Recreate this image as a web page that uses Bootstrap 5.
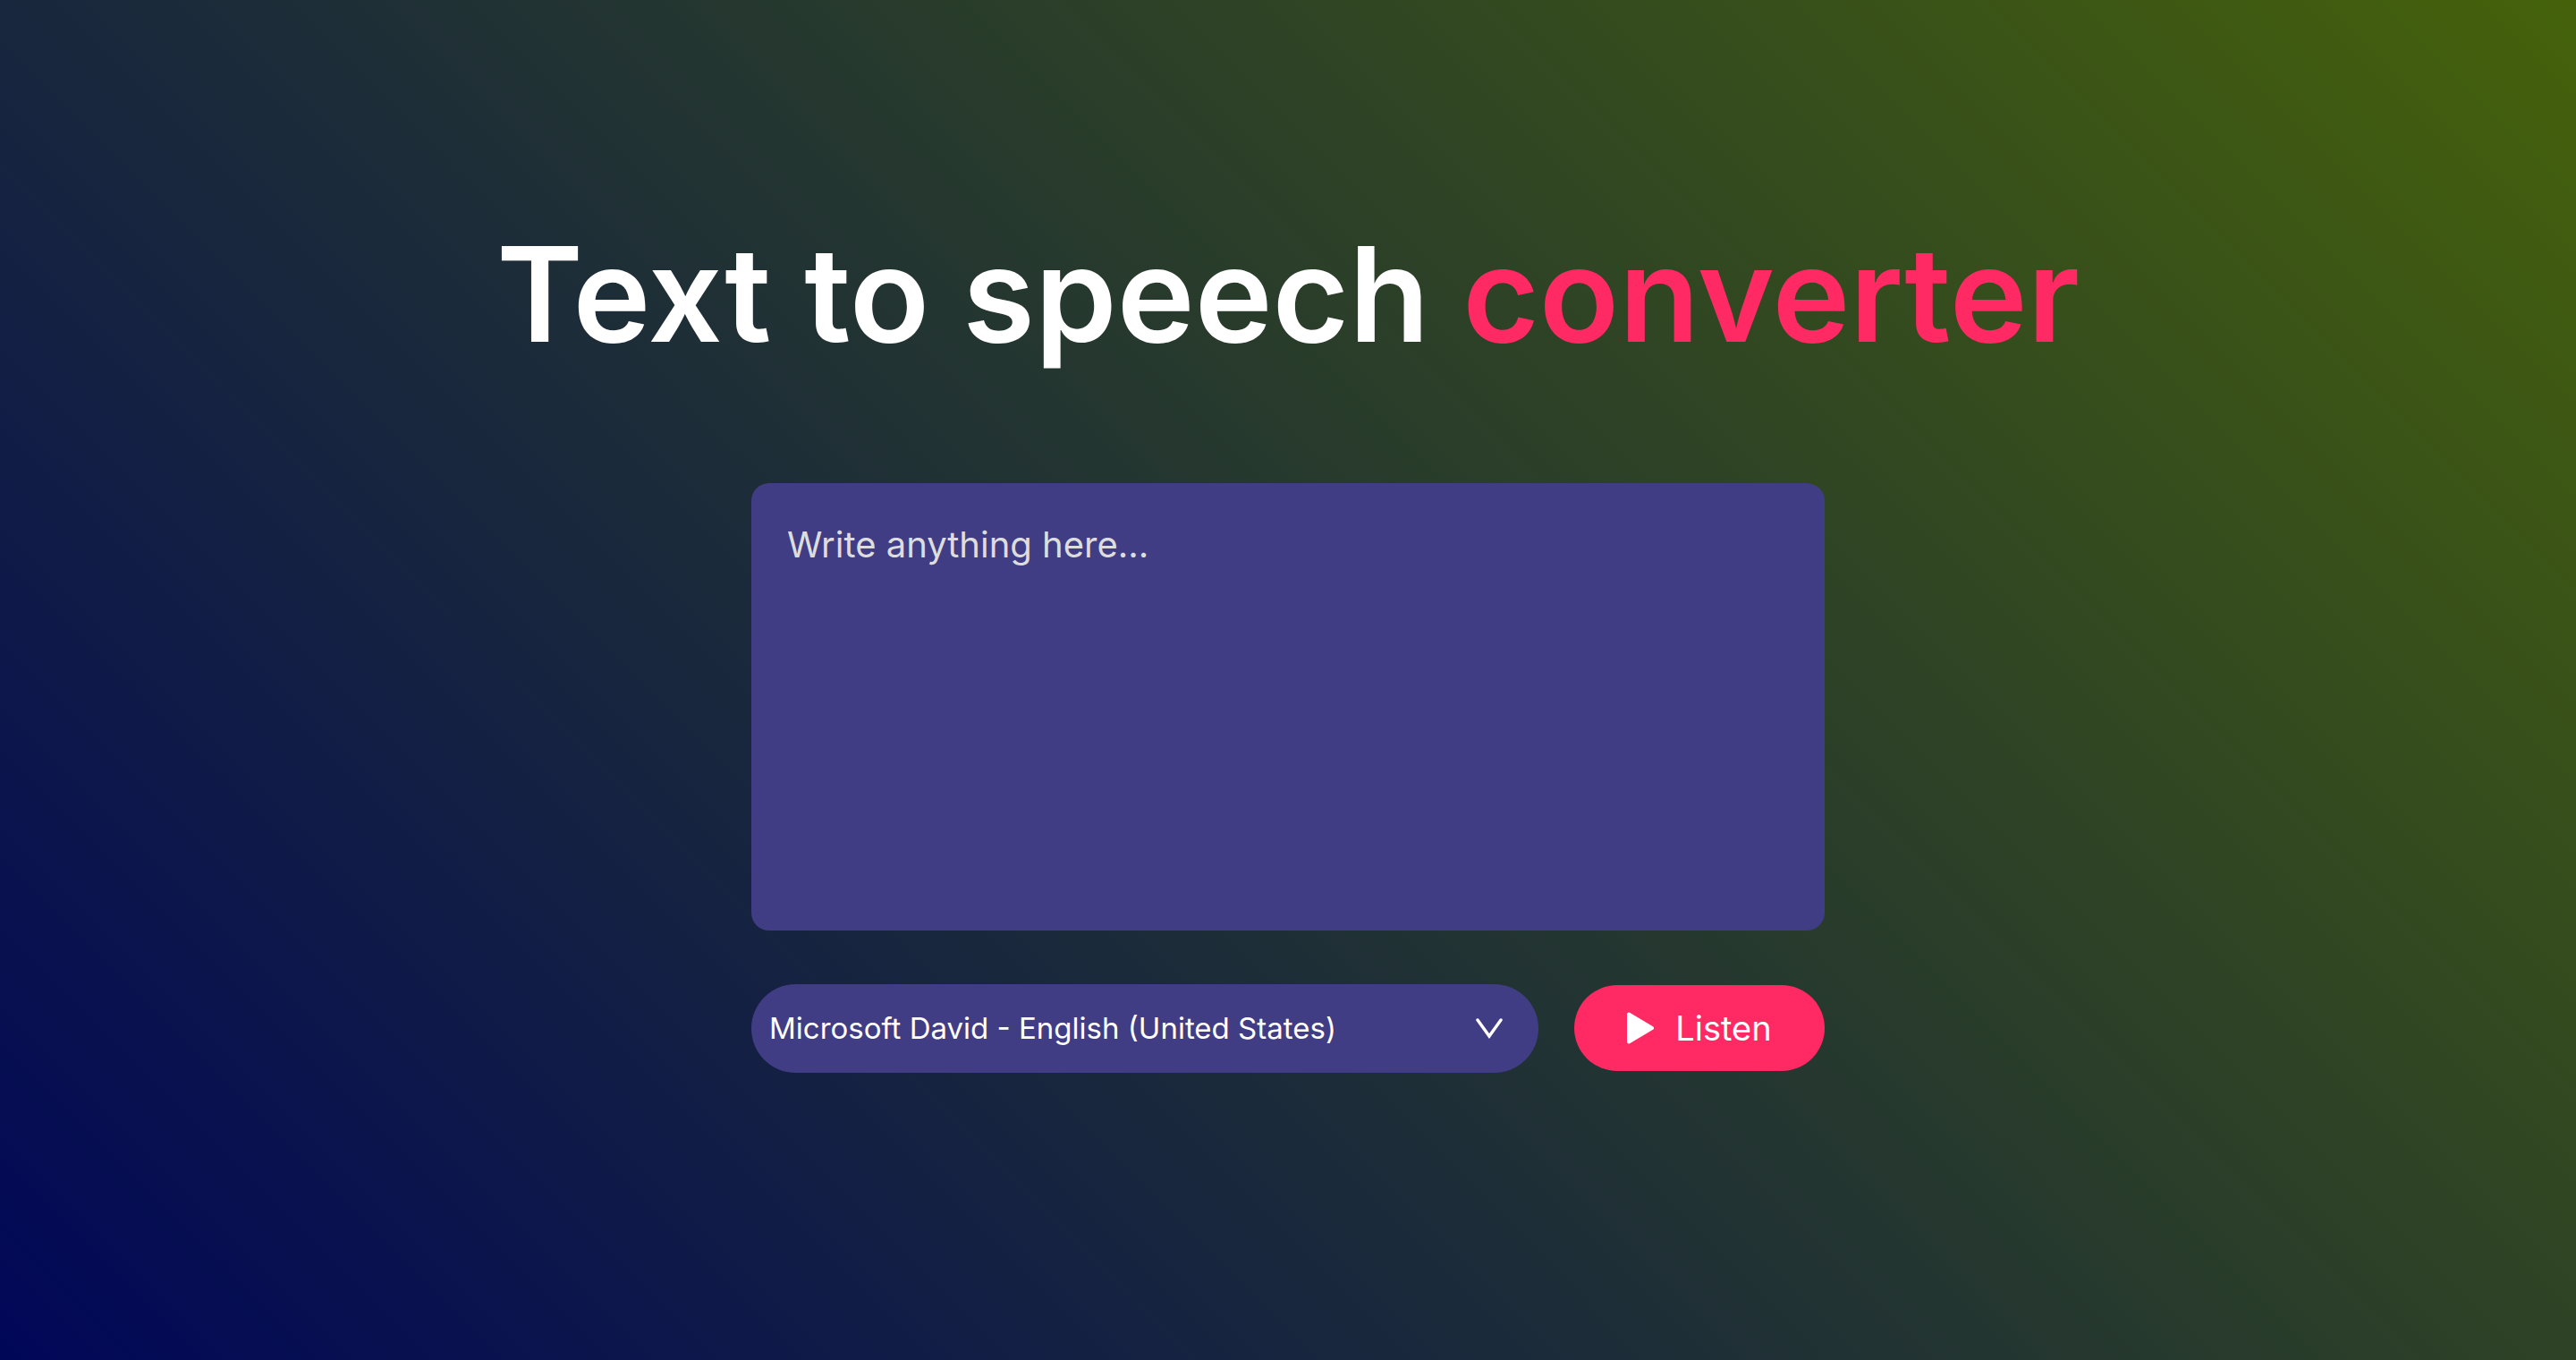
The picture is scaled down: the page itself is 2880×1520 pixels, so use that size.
<!DOCTYPE html>
<html lang="en">
<head>
<meta charset="utf-8">
<meta name="viewport" content="width=device-width, initial-scale=1">
<title>Text to speech converter</title>
<link rel="stylesheet" href="https://cdn.jsdelivr.net/npm/bootstrap@5.3.0/dist/css/bootstrap.min.css">
<style>
  body {
    font-family: Inter, "Open Sans", sans-serif;
    background: linear-gradient(45deg, #010758, #45620b) fixed;
  }
  .hero { padding-bottom: 80px; }
  .hero-title {
    font-size: 147px;
    font-weight: 600;
    line-height: 174px;
    margin-bottom: 124px;
  }
  .accent { color: #ff2963; }
  .speech-form { max-width: 1200px; }
  .speech-text,
  .speech-text:focus {
    height: 500px;
    padding: 40px;
    font-size: 40px;
    line-height: 58px;
    color: #fff;
    background: #403d84;
    border-radius: 20px;
    resize: none;
  }
  .speech-text::placeholder { color: #ddd; opacity: 1; }
  .controls { gap: 40px; margin-top: 60px; }
  .voice {
    height: 99px;
    padding: 0 100px 0 20px;
    font-size: 33px;
    line-height: 48px;
    color: #fff;
    background-color: #403d84;
    background-image: url("data:image/svg+xml,%3Csvg xmlns='http://www.w3.org/2000/svg' viewBox='0 0 30 24'%3E%3Cpath d='M2 3l13 18L28 3' fill='none' stroke='%23fff' stroke-width='3.4' stroke-linecap='round'/%3E%3C/svg%3E");
    background-size: 30px 24px;
    background-position: right 40px center;
  }
  .listen,
  .listen:hover {
    width: 280px;
    height: 96px;
    gap: 24px;
    font-size: 38px;
    line-height: 56px;
    color: #fff;
    background: #ff2963;
  }
</style>
<script src="https://cdn.jsdelivr.net/npm/bootstrap@5.3.0/dist/js/bootstrap.bundle.min.js"></script>
</head>
<body>
<main class="hero min-vh-100 d-flex flex-column align-items-center justify-content-center">
  <h1 class="hero-title text-white text-center">Text to speech <span class="accent">converter</span></h1>
  <form class="speech-form w-100">
    <textarea aria-label="Text" class="speech-text form-control border-0" placeholder="Write anything here..."></textarea>
    <div class="controls d-flex align-items-center">
      <select aria-label="Voice" class="voice form-select flex-fill border-0 rounded-pill">
        <option>Microsoft David - English (United States)</option>
      </select>
      <button type="button" class="listen btn border-0 rounded-pill flex-shrink-0 d-flex align-items-center justify-content-center">
        <svg width="30" height="36" viewBox="0 0 30 36" aria-hidden="true"><path d="M2 2.5v31L28 18z" fill="#fff" stroke="#fff" stroke-width="4" stroke-linejoin="round"/></svg>
        Listen
      </button>
    </div>
  </form>
</main>
</body>
</html>
